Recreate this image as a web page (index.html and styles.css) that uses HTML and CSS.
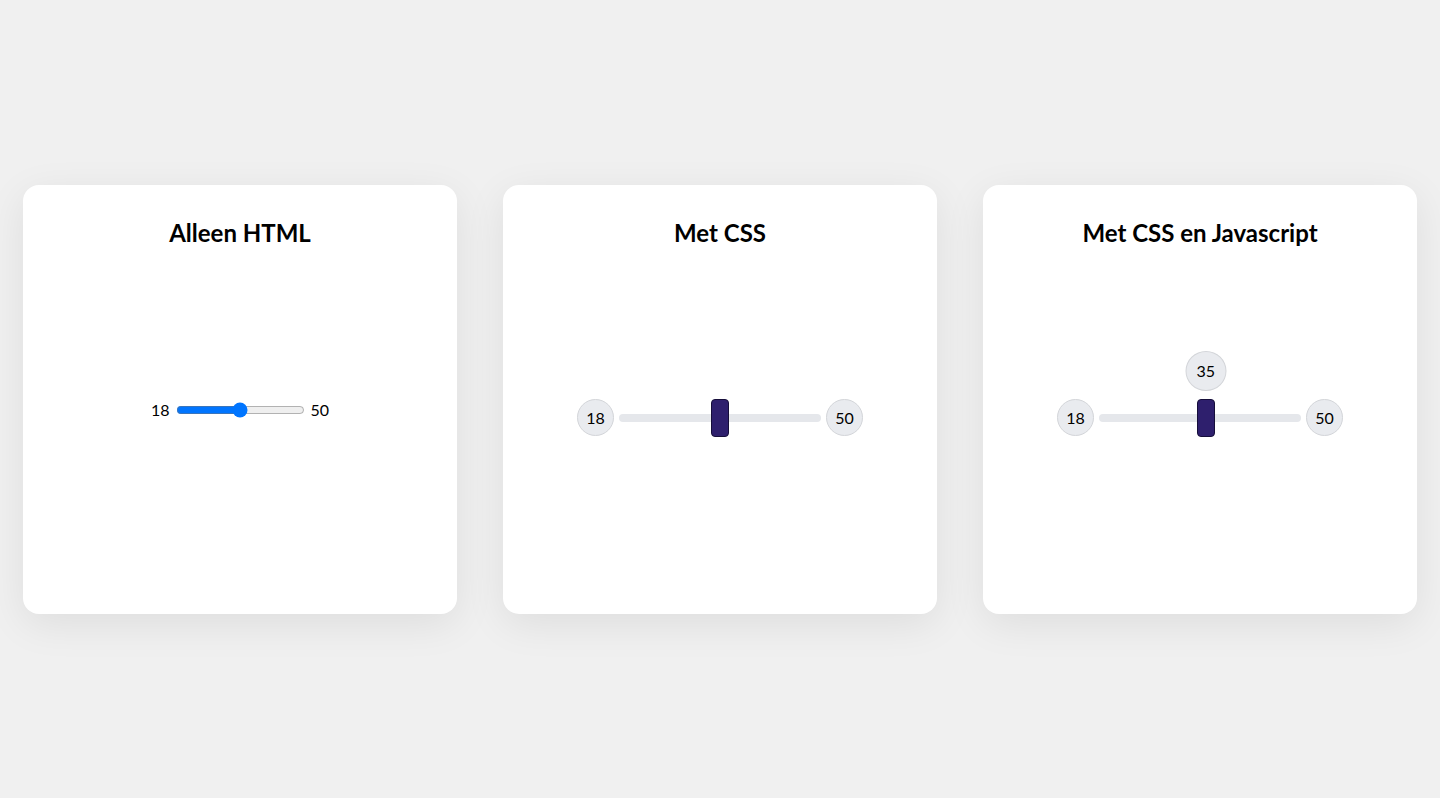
FILE: index.html
```html
<!DOCTYPE html>
<html lang="nl">
<head>
<meta charset="utf-8">
<title>Range sliders</title>
<link rel="stylesheet" href="styles.css">
</head>
<body>
<main class="cards">
  <section class="card">
    <h2 class="card-title">Alleen HTML</h2>
    <div class="card-body">
      <div class="plain">18 <input type="range" min="18" max="50"> 50</div>
    </div>
  </section>
  <section class="card">
    <h2 class="card-title">Met CSS</h2>
    <div class="card-body">
      <div class="slider">
        <span class="pill">18</span>
        <div class="track-wrap">
          <input class="fancy" type="range" min="18" max="50">
        </div>
        <span class="pill">50</span>
      </div>
    </div>
  </section>
  <section class="card">
    <h2 class="card-title">Met CSS en Javascript</h2>
    <div class="card-body">
      <div class="slider">
        <span class="pill">18</span>
        <div class="track-wrap">
          <span class="bubble" style="left: 106.75px">35</span>
          <input class="fancy" type="range" min="18" max="50" value="35">
        </div>
        <span class="pill">50</span>
      </div>
    </div>
  </section>
</main>
</body>
</html>
```
FILE: styles.css
```css
* { box-sizing: border-box; }
html, body { height: 100%; }
body {
  margin: 0;
  background: #f0f0f0;
  font-family: Lato, "Open Sans", sans-serif;
  color: #000;
  display: flex;
  align-items: center;
}
.cards {
  width: 100%;
  padding: 0 23px;
  display: grid;
  grid-template-columns: repeat(3, 1fr);
  gap: 46px;
}
.card {
  background: #fff;
  border-radius: 16px;
  height: 429px;
  box-shadow: 0 10px 40px rgba(0, 0, 0, 0.08);
  display: flex;
  flex-direction: column;
  padding: 33px 24px 42px;
}
.card-title {
  margin: 0;
  text-align: center;
  font-size: 24px;
  line-height: 30px;
  font-weight: 700;
}
.card-body {
  flex: 1;
  display: flex;
  align-items: center;
  justify-content: center;
}
.plain {
  font-size: 16px;
  display: flex;
  align-items: center;
  gap: 4px;
}
.slider {
  margin-top: 16px;
  display: flex;
  align-items: center;
  gap: 5px;
}
.pill, .bubble {
  display: flex;
  align-items: center;
  justify-content: center;
  border-radius: 50%;
  background: #e9ebef;
  border: 1px solid #d3d5d9;
  font-size: 16px;
}
.pill { width: 37px; height: 37px; }
.track-wrap {
  position: relative;
  width: 202px;
  height: 38px;
  display: flex;
  align-items: center;
}
.bubble {
  position: absolute;
  width: 41px;
  height: 40px;
  top: -48px;
  transform: translateX(-50%);
}
.fancy {
  -webkit-appearance: none;
  appearance: none;
  margin: 0;
  width: 202px;
  height: 8px;
  border-radius: 4px;
  background: #e5e7eb;
  outline: none;
}
.fancy::-webkit-slider-thumb {
  -webkit-appearance: none;
  appearance: none;
  width: 18px;
  height: 38px;
  border-radius: 4px;
  background: #2e1f6d;
  border: 1px solid #160e3a;
}
```
